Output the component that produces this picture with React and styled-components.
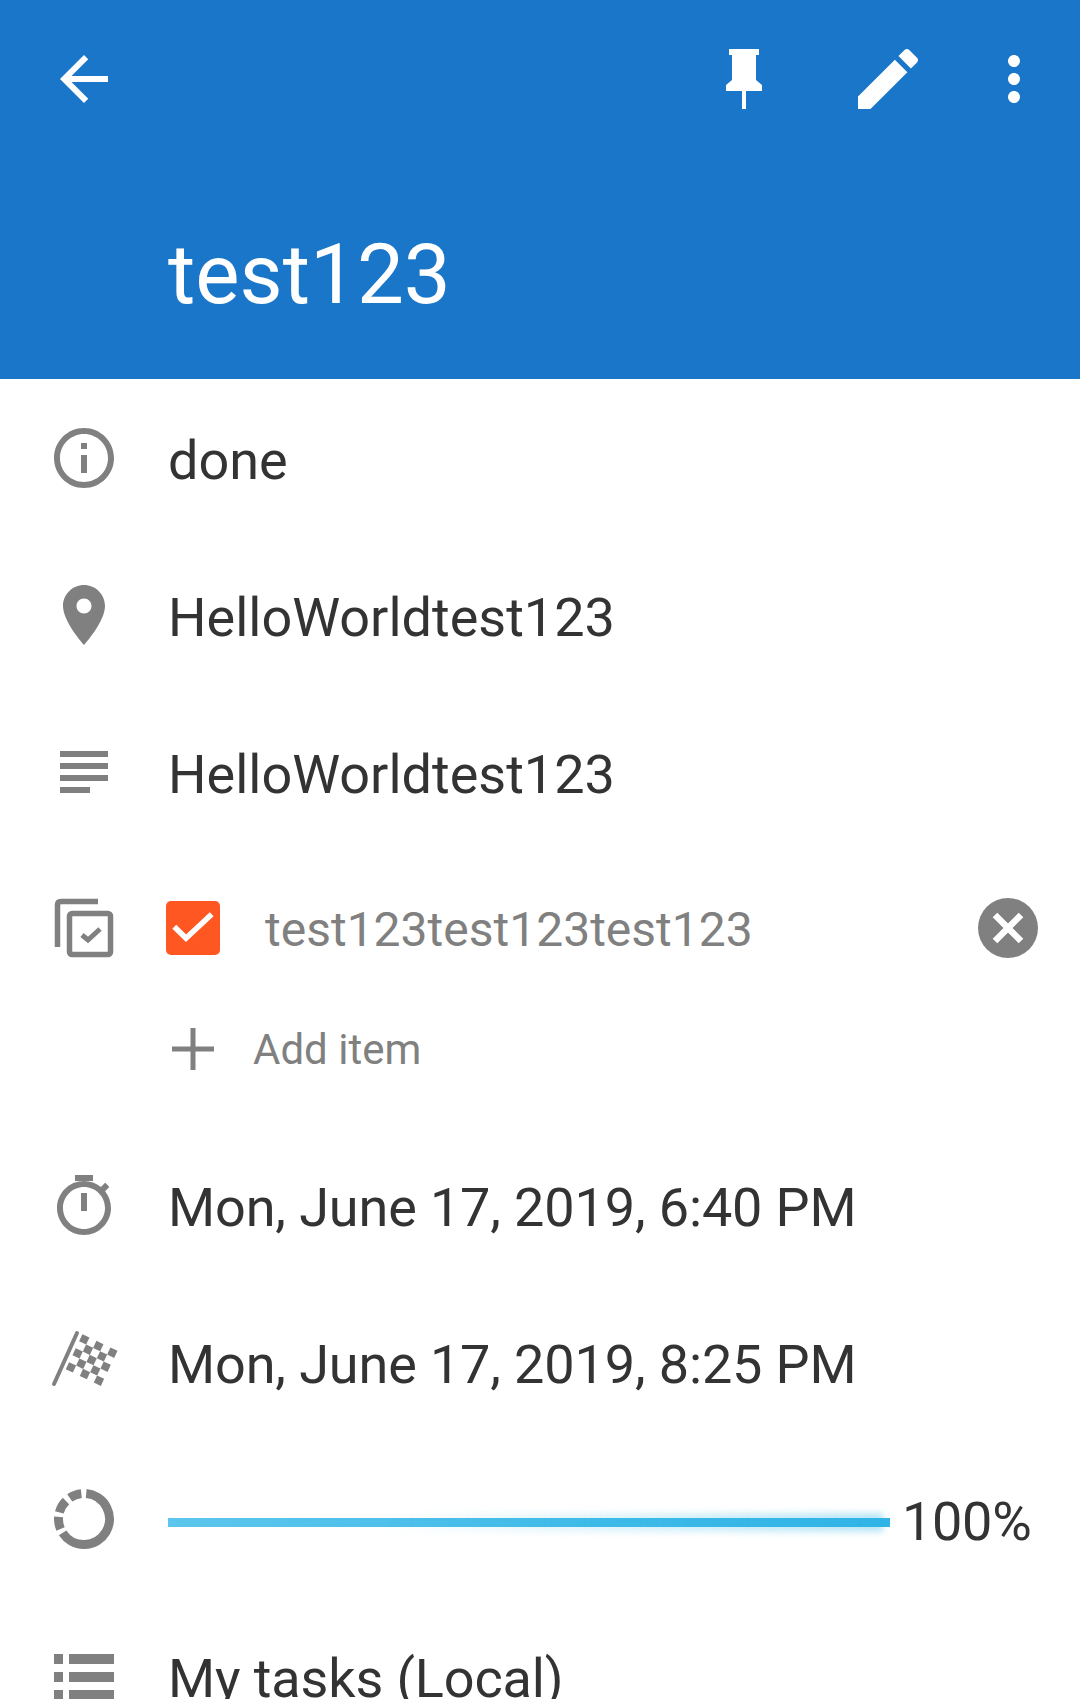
import styled, { createGlobalStyle } from "styled-components";

const Global = createGlobalStyle`
  html, body {
    margin: 0;
    padding: 0;
    background: #fff;
    overflow: hidden;
  }
  body {
    font-family: Roboto, "Liberation Sans", sans-serif;
  }
`;

const Page = styled.div`
  width: 1080px;
  height: 1699px;
  overflow: hidden;
  background: #fff;
`;

const Header = styled.header`
  height: 379px;
  box-sizing: border-box;
  background: #1976c8;
  padding-top: 7px;
`;

const Toolbar = styled.div`
  display: flex;
  padding: 0 12px;
`;

const ToolButton = styled.div`
  width: ${(p) => p.$w || 144}px;
  height: 144px;
  display: flex;
  align-items: center;
  justify-content: center;
  color: #fff;
  &:first-child {
    margin-right: auto;
  }
`;

const Title = styled.h1`
  margin: 77px 0 0 168px;
  font-size: 83.5px;
  line-height: 94px;
  font-weight: 400;
  color: #fff;
`;

const Row = styled.div`
  display: flex;
  align-items: center;
  height: ${(p) => p.$h || 157}px;
  padding-left: 48px;
`;

const IconCell = styled.div`
  width: 72px;
  height: 72px;
  flex: none;
  margin-right: 48px;
  color: #808080;
`;

const Value = styled.div`
  padding-top: 6px;
  font-size: 54px;
  line-height: 62px;
  letter-spacing: ${(p) => (p.$tight ? "-0.13px" : "0")};
  color: #333;
  white-space: nowrap;
`;

const ItemBox = styled.div`
  width: 54px;
  height: 54px;
  margin-left: -2px;
  flex: none;
  border-radius: 5px;
  background: #ff5722;
`;

const ItemText = styled.div`
  margin-left: 45px;
  padding-top: 4px;
  font-size: 48px;
  line-height: 58px;
  color: #808080;
  white-space: nowrap;
`;

const ClearButton = styled.div`
  margin-left: auto;
  margin-right: 42px;
  width: 60px;
  height: 60px;
  border-radius: 50%;
  background: #808080;
  display: flex;
  align-items: center;
  justify-content: center;
`;

const AddRow = styled.div`
  display: flex;
  align-items: center;
  height: 86px;
  padding-left: 170px;
  margin-bottom: 34px;
`;

const AddText = styled.div`
  margin-left: 37px;
  padding-top: 2px;
  font-size: 42px;
  line-height: 50px;
  color: #808080;
`;

const Slider = styled.div`
  position: relative;
  width: 722px;
  height: 9px;
  margin-top: 8px;
  flex: none;
  background: linear-gradient(90deg, #5cc6ec, #2fb4e6);
  &::before {
    content: "";
    position: absolute;
    left: 30%;
    right: 1%;
    top: -5px;
    bottom: -5px;
    background: linear-gradient(90deg, rgba(51, 181, 229, 0), rgba(51, 181, 229, 0.35));
    filter: blur(3px);
  }
`;

const Percent = styled.div`
  margin-left: 12px;
  padding-top: 6px;
  font-size: 54px;
  line-height: 62px;
  letter-spacing: -0.3px;
  color: #333;
`;

function Icon({ size = 72, d, fill = "currentColor" }) {
  return (
    <svg width={size} height={size} viewBox="0 0 24 24" fill={fill} style={{ display: "block" }}>
      <path d={d} />
    </svg>
  );
}

const ICONS = {
  back: "M20 11H7.83l5.59-5.59L12 4l-8 8 8 8 1.41-1.41L7.83 13H20v-2z",
  edit: "M3 17.25V21h3.75L17.81 9.94l-3.75-3.75L3 17.25zM20.71 7.04c.39-.39.39-1.02 0-1.41l-2.34-2.34c-.39-.39-1.02-.39-1.41 0l-1.83 1.83 3.75 3.75 1.83-1.83z",
  more: "M12 8c1.1 0 2-.9 2-2s-.9-2-2-2-2 .9-2 2 .9 2 2 2zm0 2c-1.1 0-2 .9-2 2s.9 2 2 2 2-.9 2-2-.9-2-2-2zm0 6c-1.1 0-2 .9-2 2s.9 2 2 2 2-.9 2-2-.9-2-2-2z",
  info: "M11 17h2v-6h-2v6zm1-15C6.48 2 2 6.48 2 12s4.48 10 10 10 10-4.48 10-10S17.52 2 12 2zm0 18c-4.41 0-8-3.59-8-8s3.59-8 8-8 8 3.59 8 8-3.59 8-8 8zM11 9h2V7h-2v2z",
  place: "M12 2C8.13 2 5 5.13 5 9c0 5.25 7 13 7 13s7-7.75 7-13c0-3.87-3.13-7-7-7zm0 9.5c-1.38 0-2.5-1.12-2.5-2.5s1.12-2.5 2.5-2.5 2.5 1.12 2.5 2.5-1.12 2.5-2.5 2.5z",
  notes: "M14 17H4v2h10v-2zm6-8H4v2h16V9zM4 15h16v-2H4v2zM4 5v2h16V5H4z",
  timer: "M15 2H9v2h6V2zm-4 12h2V8h-2v6zm8.03-6.61l1.42-1.42c-.43-.51-.9-.99-1.41-1.41l-1.42 1.42C16.07 4.74 14.12 4 12 4c-4.97 0-9 4.03-9 9s4.02 9 9 9 9-4.03 9-9c0-2.12-.74-4.07-1.97-5.61zM12 20c-3.87 0-7-3.13-7-7s3.13-7 7-7 7 3.13 7 7-3.13 7-7 7z",
};

function PinIcon() {
  return (
    <svg width="72" height="72" viewBox="0 0 72 72" fill="#fff" style={{ display: "block" }}>
      <path d="M21 6h30v6h-3v25l6 5v6H38v18h-4V48H18v-6l6-5V12h-3z" />
    </svg>
  );
}

function ChecklistIcon() {
  return (
    <svg width="72" height="72" viewBox="0 0 72 72" fill="none" stroke="currentColor" style={{ display: "block" }}>
      <path d="M50 9.500H13q-3.500 0-3.500 3.500V55" strokeWidth="5.500" />
      <rect x="21.500" y="21.500" width="41" height="41" rx="2.500" strokeWidth="5.500" />
      <path d="M34 43l6 5 12-11" strokeWidth="5" />
    </svg>
  );
}

function FlagIcon() {
  const u = [14, 6.65];
  const v = [-6.67, 14];
  const base = [36.3, 13.4];
  const cells = [];
  for (let i = 0; i < 3; i++) {
    for (let j = 0; j < 3; j++) {
      cells.push([base[0] + i * u[0] + j * v[0], base[1] + i * u[1] + j * v[1]]);
    }
  }
  for (let i = 0; i < 2; i++) {
    for (let j = 0; j < 2; j++) {
      cells.push([
        base[0] + (u[0] + v[0]) / 2 + i * u[0] + j * v[0],
        base[1] + (u[1] + v[1]) / 2 + i * u[1] + j * v[1],
      ]);
    }
  }
  return (
    <svg width="72" height="72" viewBox="0 0 72 72" fill="currentColor" style={{ display: "block", overflow: "visible" }}>
      <path d="M6 58L29 7" stroke="currentColor" strokeWidth="4" strokeLinecap="round" />
      {cells.map(([x, y], i) => (
        <rect key={i} x={x - 3.9} y={y - 3.9} width="7.8" height="7.8" transform={`rotate(25 ${x} ${y})`} />
      ))}
    </svg>
  );
}

// clockwise angle from the top, in degrees
function arc(from, to) {
  const r = 25.5;
  const pt = (a) => {
    const t = (a * Math.PI) / 180;
    return `${36 + r * Math.sin(t)} ${36 - r * Math.cos(t)}`;
  };
  return `M${pt(from)}A${r} ${r} 0 ${to - from > 180 ? 1 : 0} 1 ${pt(to)}`;
}

function ProgressIcon() {
  return (
    <svg width="72" height="72" viewBox="0 0 72 72" fill="none" stroke="currentColor" strokeWidth="9" style={{ display: "block" }}>
      <path d={arc(5, 237)} />
      <path d={arc(247, 275)} />
      <path d={arc(285, 315)} />
      <path d={arc(326, 354)} />
    </svg>
  );
}

function ListIcon() {
  return (
    <svg width="72" height="72" viewBox="0 0 72 72" fill="currentColor" style={{ display: "block" }}>
      <path d="M6 14h9v10H6zM21 14h45v10H21zM6 32h9v10H6zM21 32h45v10H21zM6 50h9v10H6zM21 50h45v10H21z" />
    </svg>
  );
}

export default function App() {
  return (
    <Page>
      <Global />
      <Header>
        <Toolbar>
          <ToolButton>
            <Icon d={ICONS.back} />
          </ToolButton>
          <ToolButton>
            <PinIcon />
          </ToolButton>
          <ToolButton>
            <Icon size={80} d={ICONS.edit} />
          </ToolButton>
          <ToolButton $w={108}>
            <Icon d={ICONS.more} />
          </ToolButton>
        </Toolbar>
        <Title>test123</Title>
      </Header>

      <Row>
        <IconCell>
          <Icon d={ICONS.info} />
        </IconCell>
        <Value>done</Value>
      </Row>
      <Row>
        <IconCell>
          <Icon d={ICONS.place} />
        </IconCell>
        <Value>HelloWorldtest123</Value>
      </Row>
      <Row>
        <IconCell>
          <Icon d={ICONS.notes} />
        </IconCell>
        <Value>HelloWorldtest123</Value>
      </Row>

      <Row $h={156}>
        <IconCell>
          <ChecklistIcon />
        </IconCell>
        <ItemBox>
          <svg width="54" height="54" viewBox="0 0 54 54" fill="none" stroke="#fff" strokeWidth="5.500" style={{ display: "block" }}>
            <path d="M8.300 25.700L20 37.300 45.700 13.300" />
          </svg>
        </ItemBox>
        <ItemText>test123test123test123</ItemText>
        <ClearButton>
          <svg width="36" height="36" viewBox="0 0 36 36" stroke="#fff" strokeWidth="6.500">
            <path d="M5 5l26 26M31 5L5 31" />
          </svg>
        </ClearButton>
      </Row>
      <AddRow>
        <svg width="46" height="46" viewBox="0 0 46 46" fill="#808080" style={{ flex: "none" }}>
          <path d="M20.500 2h5v18.500H44v5H25.500V44h-5V25.500H2v-5h18.500z" />
        </svg>
        <AddText>Add item</AddText>
      </AddRow>

      <Row>
        <IconCell>
          <Icon d={ICONS.timer} />
        </IconCell>
        <Value $tight>Mon, June 17, 2019, 6:40 PM</Value>
      </Row>
      <Row>
        <IconCell>
          <FlagIcon />
        </IconCell>
        <Value $tight>Mon, June 17, 2019, 8:25 PM</Value>
      </Row>
      <Row>
        <IconCell>
          <ProgressIcon />
        </IconCell>
        <Slider />
        <Percent>100%</Percent>
      </Row>
      <Row>
        <IconCell>
          <ListIcon />
        </IconCell>
        <Value $tight>My tasks (Local)</Value>
      </Row>
    </Page>
  );
}
